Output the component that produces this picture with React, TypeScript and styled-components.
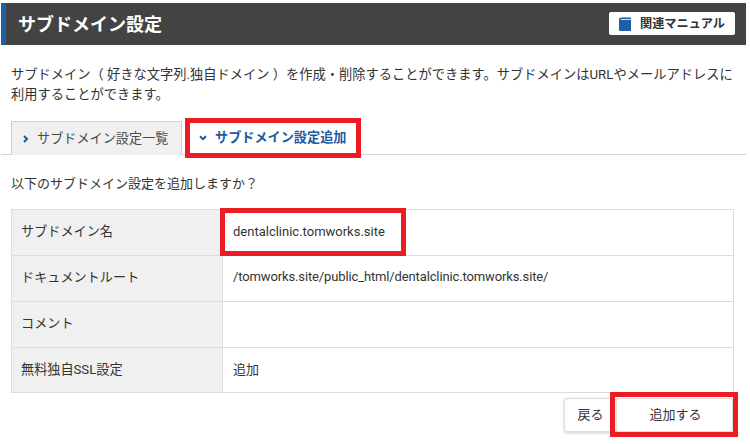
import styled, { createGlobalStyle } from "styled-components";

const GlobalStyle = createGlobalStyle`
  * {
    box-sizing: border-box;
  }
  html, body {
    margin: 0;
    padding: 0;
    background: #ffffff;
  }
  body {
    font-family: Roboto, "Noto Sans CJK JP", sans-serif;
    color: #333333;
  }
`;

const rows = [
  { label: "サブドメイン名", value: "dentalclinic.tomworks.site", marked: true },
  { label: "ドキュメントルート", value: "/tomworks.site/public_html/dentalclinic.tomworks.site/", tight: true },
  { label: "コメント", value: "" },
  { label: "無料独自SSL設定", value: "追加" },
];

export default function App() {
  return (
    <Page>
      <GlobalStyle />
      <Header>
        <h1>サブドメイン設定</h1>
        <ManualLink>
          <svg width="12" height="14" viewBox="0 0 12 14">
            <path d="M0 2.5C0 1.4.8.5 1.8.5H12V14H1.8C.8 14 0 13.4 0 12.4Z" fill="#1f5fa8" />
            <path d="M1.6 2H12V2.8H1.6Z" fill="#ffffff" />
          </svg>
          <span>関連マニュアル</span>
        </ManualLink>
      </Header>
      <Description>
        サブドメイン（ 好きな文字列.独自ドメイン ）を作成・削除することができます。サブドメインはURLやメールアドレスに利用することができます。
      </Description>
      <Tabs>
        <Tab>
          <svg width="8" height="8" viewBox="0 0 8 8">
            <path d="M2 1l3 3-3 3" fill="none" stroke="#1f5a9e" strokeWidth="2" />
          </svg>
          <TabLabel>サブドメイン設定一覧</TabLabel>
        </Tab>
        <Tab $active>
          <svg width="8" height="8" viewBox="0 0 8 8">
            <path d="M1 2.2l3 3 3-3" fill="none" stroke="#1f5a9e" strokeWidth="2" />
          </svg>
          <TabLabel>サブドメイン設定追加</TabLabel>
          <RedFrame />
        </Tab>
      </Tabs>
      <Question>以下のサブドメイン設定を追加しますか？</Question>
      <Table>
        {rows.map((row) => (
          <Row key={row.label}>
            <Label>{row.label}</Label>
            <Value $tight={row.tight}>
              {row.value}
              {row.marked && <RedFrame />}
            </Value>
          </Row>
        ))}
      </Table>
      <Actions>
        <BackButton>戻る</BackButton>
        <SubmitButton>
          追加する
          <RedFrame />
        </SubmitButton>
      </Actions>
    </Page>
  );
}

const Page = styled.div`
  width: 750px;
  height: 444px;
  overflow: hidden;
  padding: 3px 4px 0 1px;
`;

const Header = styled.div`
  height: 42px;
  display: flex;
  align-items: center;
  justify-content: space-between;
  padding: 0 11px 0 12px;
  border-left: 5px solid #1f5fa8;
  background-color: #434343;
  background-image: radial-gradient(#4c4c4c 0.6px, transparent 0.7px);
  background-size: 4px 4px;
  h1 {
    margin: -2px 0 0;
    font-size: 18px;
    font-weight: 700;
    color: #ffffff;
  }
`;

const ManualLink = styled.a`
  width: 126px;
  height: 23px;
  display: flex;
  align-items: center;
  gap: 9px;
  padding-left: 10px;
  margin-top: -1px;
  background: #ffffff;
  border-radius: 2px;
  font-size: 12.2px;
  font-weight: 700;
  color: #333333;
  span {
    margin-top: -2px;
  }
`;

const Description = styled.p`
  margin: 0;
  padding: 20px 8px 0 10px;
  font-size: 13.25px;
  line-height: 20px;
`;

const Tabs = styled.div`
  display: flex;
  height: 34px;
  margin-top: 16px;
  padding-left: 10px;
  border-bottom: 1px solid #d4d4d4;
`;

const Tab = styled.div<{ $active?: boolean }>`
  position: relative;
  width: ${(p) => (p.$active ? "170px" : "171px")};
  height: 34px;
  flex: none;
  display: flex;
  align-items: center;
  gap: ${(p) => (p.$active ? "8px" : "7px")};
  padding-left: ${(p) => (p.$active ? "11px" : "10px")};
  margin-left: ${(p) => (p.$active ? "6px" : "0")};
  background: ${(p) => (p.$active ? "#ffffff" : "#f0f0f0")};
  border: ${(p) => (p.$active ? "none" : "1px solid #d0d0d0")};
  border-bottom: none;
  font-size: 13.15px;
  font-weight: ${(p) => (p.$active ? 700 : 400)};
  color: ${(p) => (p.$active ? "#1f5a9e" : "#4a4a4a")};
`;

const TabLabel = styled.span`
  margin-top: -3px;
`;

const RedFrame = styled.span`
  position: absolute;
  inset: -3px;
  border: 5px solid #ed1c24;
  pointer-events: none;
`;

const Question = styled.p`
  margin: 0;
  padding: 19px 10px 0 10px;
  font-size: 13px;
  line-height: 20px;
`;

const Table = styled.div`
  width: 723px;
  margin: 15px 0 0 10px;
  border: 1px solid #dddddd;
  border-bottom: none;
`;

const Row = styled.div`
  display: grid;
  grid-template-columns: 211px 1fr;
  height: 46px;
  border-bottom: 1px solid #dddddd;
  font-size: 13px;
  &:last-child {
    height: 45px;
  }
`;

const Label = styled.div`
  display: flex;
  align-items: center;
  padding: 0 0 4px 9px;
  background: #f0f0f0;
  border-right: 1px solid #dddddd;
  font-size: 13.15px;
`;

const Value = styled.div<{ $tight?: boolean }>`
  position: relative;
  display: flex;
  align-items: center;
  padding: 0 0 ${(p) => (p.$tight ? "4px" : "3px")} 10px;
  letter-spacing: ${(p) => (p.$tight ? "-0.13px" : "0")};
  & > span {
    inset: -2px auto -1px -3px;
    width: 186px;
  }
`;

const Actions = styled.div`
  display: flex;
  justify-content: flex-end;
  margin-top: 5px;
  padding-right: 13px;
`;

const BackButton = styled.button`
  width: 53px;
  height: 34px;
  padding: 0 0 3px;
  background: #ffffff;
  border: 1px solid #dddddd;
  border-radius: 3px;
  box-shadow: 0 1px 3px rgba(0, 0, 0, 0.2);
  font: inherit;
  font-size: 13px;
  color: #333333;
`;

const SubmitButton = styled(BackButton)`
  position: relative;
  width: 117px;
  margin-left: -1px;
  padding-left: 2px;
  span {
    inset: -7px -6px -6px -7px;
  }
`;
